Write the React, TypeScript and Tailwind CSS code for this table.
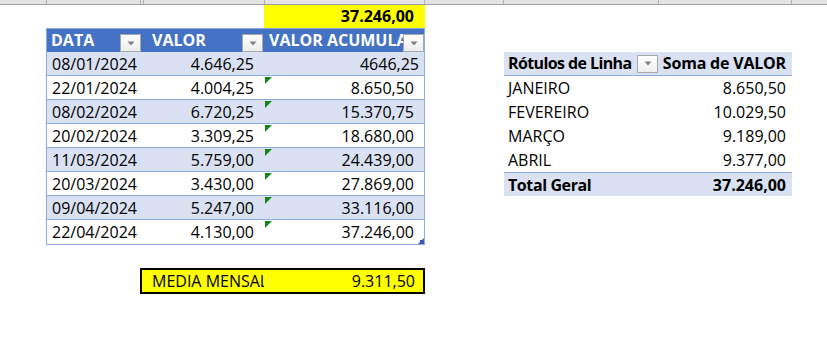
import React from "react";

const rows = [
  ["08/01/2024", "4.646,25", "4646,25"],
  ["22/01/2024", "4.004,25", "8.650,50"],
  ["08/02/2024", "6.720,25", "15.370,75"],
  ["20/02/2024", "3.309,25", "18.680,00"],
  ["11/03/2024", "5.759,00", "24.439,00"],
  ["20/03/2024", "3.430,00", "27.869,00"],
  ["09/04/2024", "5.247,00", "33.116,00"],
  ["22/04/2024", "4.130,00", "37.246,00"],
];

const pivot = [
  ["JANEIRO", "8.650,50"],
  ["FEVEREIRO", "10.029,50"],
  ["MARÇO", "9.189,00"],
  ["ABRIL", "9.377,00"],
];

function DropBtn() {
  return (
    <div className="shrink-0 w-[21px] h-[18px] border border-[#a9a9a9] bg-gradient-to-b from-white to-[#eeeeee] flex items-center justify-center">
      <svg width="8" height="5" viewBox="0 0 8 5">
        <path d="M0.5 0.5 L7.5 0.5 L4 4.5 Z" fill="#808080" />
      </svg>
    </div>
  );
}

function GreenTri() {
  return (
    <svg className="absolute left-0 top-[1px]" width="7" height="7" viewBox="0 0 7 7">
      <path d="M0 0 L7 0 L0 7 Z" fill="#178217" />
    </svg>
  );
}

export default function App() {
  return (
    <div className="w-[827px] h-[347px] bg-white overflow-hidden font-['Open_Sans',sans-serif] text-[16px] text-black">
      {/* column header strip */}
      <div className="flex h-[5px] bg-[#e3e3e3] border-b border-[#a0a0a0]">
        <div className="w-[47px] border-r border-[#b0b0b0]" />
        <div className="w-[94px] border-r border-[#b0b0b0]" />
        <div className="w-[3px] border-r border-[#b0b0b0]" />
        <div className="w-[121px] border-r border-[#b0b0b0]" />
        <div className="w-[160px] border-r border-[#b0b0b0]" />
        <div className="w-[79px] border-r border-[#b0b0b0]" />
        <div className="w-[155px] border-r border-[#b0b0b0]" />
        <div className="w-[133px] border-r border-[#b0b0b0]" />
        <div className="flex-1" />
      </div>

      <div className="flex">
        {/* left block */}
        <div className="ml-[46px] w-[379px] flex flex-col">
          <div className="h-[23px] flex">
            <div className="ml-[218px] w-[161px] bg-[#ffff00] font-bold text-right pr-[11px] leading-[23px]">
              37.246,00
            </div>
          </div>

          <div className="relative border border-[#8ea9db] w-[379px]">
            {/* header */}
            <div className="flex h-[23px] bg-[#4472c4] text-white font-bold leading-[23px]">
              <div className="w-[95px] flex justify-between items-end pl-[4px] pr-[1px]">
                <span className="self-start">DATA</span>
                <DropBtn />
              </div>
              <div className="w-[123px] flex justify-between items-end pl-[10px] pr-[2px]">
                <span className="self-start">VALOR</span>
                <DropBtn />
              </div>
              <div className="w-[159px] flex items-end pl-[4px]">
                <span className="self-start w-[134px] overflow-hidden whitespace-nowrap">VALOR ACUMULADO</span>
                <DropBtn />
              </div>
            </div>
            {rows.map((r, i) => (
              <div
                key={i}
                className={`flex h-[24px] leading-[25px] ${i % 2 === 0 ? "bg-[#d9e1f2]" : "bg-white"} ${i < rows.length - 1 ? "border-b border-[#8ea9db]" : ""}`}
              >
                <div className="w-[95px] pl-[5px] h-[23px]">{r[0]}</div>
                <div className="w-[123px] text-right pr-[11px] h-[23px]">{r[1]}</div>
                <div className={`relative w-[159px] h-[23px] text-right ${i === 0 ? "pr-[5px]" : "pr-[10px]"}`}>
                  {i > 0 && <GreenTri />}
                  {r[2]}
                </div>
              </div>
            ))}
            <svg className="absolute right-0 bottom-0" width="6" height="6" viewBox="0 0 6 6">
              <path d="M6 0 L6 6 L0 6 Z" fill="#4059b8" />
              <rect x="2" y="2" width="4" height="4" fill="#4059b8" />
            </svg>
          </div>

          <div className="mt-[23px] ml-[94px] w-[285px] h-[26px] border-2 border-black bg-[#ffff00] flex leading-[23px]">
            <div className="w-[122px] pl-[10px] overflow-hidden whitespace-nowrap">MEDIA MENSAL</div>
            <div className="flex-1 text-right pr-[8px]">9.311,50</div>
          </div>
        </div>

        {/* pivot */}
        <div className="ml-[79px] mt-[47px] w-[288px] flex flex-col">
          <div className="flex h-[24px] bg-[#d9e1f2] border-b border-[#8ea9db] font-bold leading-[23px]">
            <div className="w-[155px] flex justify-between items-center pl-[4px] pr-[1px]">
              <span className="whitespace-nowrap tracking-[-0.6px]">Rótulos de Linha</span>
              <DropBtn />
            </div>
            <div className="flex-1 text-right pr-[6px] whitespace-nowrap tracking-[-0.2px]">Soma de VALOR</div>
          </div>
          {pivot.map((p, i) => (
            <div key={i} className="flex h-[24px] leading-[25px]">
              <div className="w-[155px] pl-[4px]">{p[0]}</div>
              <div className="flex-1 text-right pr-[6px]">{p[1]}</div>
            </div>
          ))}
          <div className="flex h-[24px] bg-[#d9e1f2] border-t border-[#8ea9db] font-bold leading-[24px]">
            <div className="w-[155px] pl-[4px] tracking-[-0.4px]">Total Geral</div>
            <div className="flex-1 text-right pr-[6px]">37.246,00</div>
          </div>
        </div>
      </div>
    </div>
  );
}
